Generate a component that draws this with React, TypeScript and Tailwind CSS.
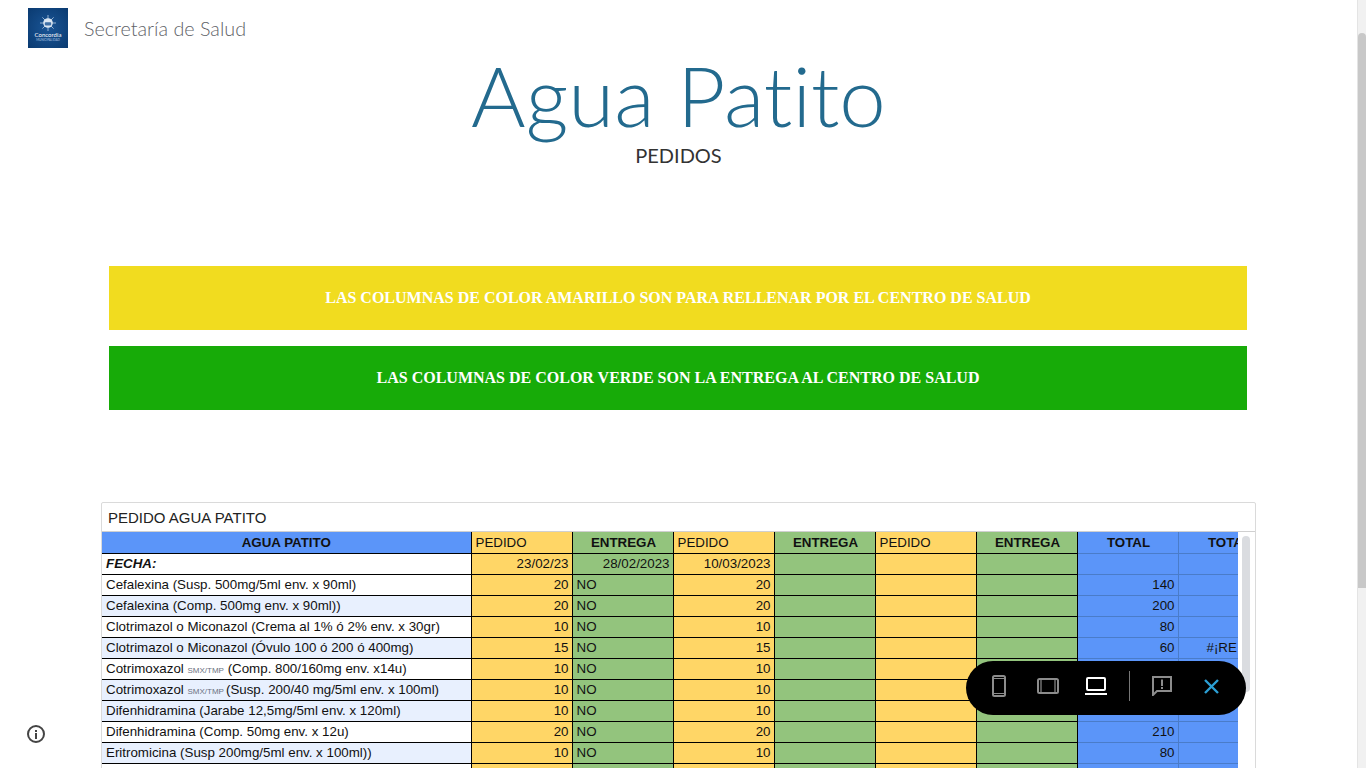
import React from 'react';

const SANS = "font-['Liberation_Sans',Arial,sans-serif]";

interface Row {
  name: React.ReactNode;
  pedido?: string;
  entrega?: string;
  pedido2?: string;
  total?: string;
  total2?: string;
  alt?: boolean;
}

const Smx = () => <span className="text-[8px] text-gray-500">SMX/TMP</span>;

const rows: Row[] = [
  { name: 'Cefalexina (Susp. 500mg/5ml env. x 90ml)', pedido: '20', entrega: 'NO', pedido2: '20', total: '140' },
  { name: 'Cefalexina (Comp. 500mg env. x 90ml))', pedido: '20', entrega: 'NO', pedido2: '20', total: '200', alt: true },
  { name: 'Clotrimazol o Miconazol (Crema al 1% ó 2% env. x 30gr)', pedido: '10', entrega: 'NO', pedido2: '10', total: '80' },
  { name: 'Clotrimazol o Miconazol (Óvulo 100 ó 200 ó 400mg)', pedido: '15', entrega: 'NO', pedido2: '15', total: '60', total2: '#¡RE', alt: true },
  { name: <>Cotrimoxazol <Smx /> (Comp. 800/160mg env. x14u)</>, pedido: '10', entrega: 'NO', pedido2: '10', total: '150' },
  { name: <>Cotrimoxazol <Smx /><span className="ml-[2px]">(Susp. 200/40 mg/5ml env. x 100ml)</span></>, pedido: '10', entrega: 'NO', pedido2: '10', total: '90', alt: true },
  { name: 'Difenhidramina (Jarabe 12,5mg/5ml env. x 120ml)', pedido: '10', entrega: 'NO', pedido2: '10', total: '70', alt: true },
  { name: 'Difenhidramina (Comp. 50mg env. x 12u)', pedido: '20', entrega: 'NO', pedido2: '20', total: '210' },
  { name: 'Eritromicina (Susp 200mg/5ml env. x 100ml))', pedido: '10', entrega: 'NO', pedido2: '10', total: '80', alt: true },
  { name: '' },
];

const td = 'h-[21px] p-0 pl-[4px] pr-[3px] overflow-hidden whitespace-nowrap border border-black leading-none';
const yellow = `${td} bg-[#ffd666] text-right`;
const green = `${td} bg-[#93c47d]`;
const blue = 'h-[21px] p-0 pl-[4px] pr-[3px] overflow-hidden whitespace-nowrap border border-[#4a7cc9] bg-[#5b95f9] text-right leading-none';

function Logo() {
  return (
    <div className="w-10 h-10 shrink-0 bg-[radial-gradient(circle,#1a5596,#0a3a70)] flex flex-col items-center justify-center">
      <svg viewBox="0 0 20 20" className="w-[16px] h-[16px]">
        <g stroke="#b9cde3" strokeWidth="1">
          <path d="M10 0v20M0 10h20M3 3l14 14M17 3L3 17" />
        </g>
        <circle cx="10" cy="10" r="6" fill="#dbe6f2" />
        <rect x="6" y="9" width="8" height="4" rx="1" fill="#3f6fa5" />
      </svg>
      <span className="text-[6px] leading-[7px] text-white font-['Lato',sans-serif]">Concordia</span>
      <span className="text-[3px] leading-[4px] text-[#a9c4e0] font-['Lato',sans-serif]">MUNICIPALIDAD</span>
    </div>
  );
}

function PreviewBar() {
  return (
    <div className="absolute left-[966px] top-[661px] w-[280px] h-[54px] rounded-[27px] bg-black flex items-center pl-[9px] pb-[4px]">
      <div className="w-12 flex justify-center">
        <svg width="14" height="22" viewBox="0 0 14 22" fill="none" stroke="#8c8c8c" strokeWidth="2">
          <rect x="1" y="1" width="12" height="20" rx="1.5" />
          <path d="M1 3.5h12M1 18.5h12" strokeWidth="1.2" />
        </svg>
      </div>
      <div className="w-12 ml-px flex justify-center">
        <svg width="22" height="16" viewBox="0 0 22 16" fill="none" stroke="#8c8c8c" strokeWidth="2">
          <rect x="1" y="1" width="20" height="14" rx="1.5" />
          <path d="M4 1v14M18 1v14" strokeWidth="1.2" />
        </svg>
      </div>
      <div className="w-12 flex justify-center">
        <svg width="22" height="18" viewBox="0 0 22 18" fill="none" stroke="#fff" strokeWidth="2">
          <rect x="2" y="1" width="18" height="12" rx="1" />
          <path d="M0 17h22" />
        </svg>
      </div>
      <div className="w-px h-[30px] bg-[#777] ml-[9px]" />
      <div className="w-12 ml-2 flex justify-center">
        <svg width="20" height="20" viewBox="0 0 20 20" fill="none" stroke="#8c8c8c" strokeWidth="2">
          <path d="M1 1h18v14H5l-4 4z" />
          <path d="M10 3.5v6.5M10 11v2" />
        </svg>
      </div>
      <div className="w-12 ml-px flex justify-center">
        <svg width="15" height="15" viewBox="0 0 15 15" fill="none" stroke="#2b9fd4" strokeWidth="2.4">
          <path d="M1 1l13 13M14 1L1 14" />
        </svg>
      </div>
    </div>
  );
}

export default function App() {
  return (
    <div className="relative h-screen overflow-hidden bg-white flex">
      <div className="w-[1357px] shrink-0 overflow-hidden">
        {/* Header */}
        <header className="h-[58px] pl-[28px] flex items-start pt-[8px]">
          <Logo />
          <span className="ml-[16px] mt-[9px] text-[19.75px] leading-6 font-light text-[#5f6368] font-['Lato',sans-serif]">
            Secretaría de Salud
          </span>
        </header>

        {/* Title */}
        <div className="text-center font-['Lato',sans-serif] [font-variant-ligatures:none]">
          <h1 className="text-[83.4px] leading-[75px] font-light text-[#236a8e]">Agua Patito</h1>
          <p className="mt-[9px] text-[20px] leading-[26px] text-[#333]">PEDIDOS</p>
        </div>

        {/* Banners */}
        <div className="mt-[98px] mx-[109px] w-[1138px] flex flex-col gap-4">
          <div className="h-16 bg-[#f1dc1f] flex items-center justify-center text-white text-[16px] font-bold font-['Liberation_Serif',serif]">
            LAS COLUMNAS DE COLOR AMARILLO SON PARA RELLENAR POR EL CENTRO DE SALUD
          </div>
          <div className="h-16 bg-[#17ab08] flex items-center justify-center text-white text-[16px] font-bold font-['Liberation_Serif',serif]">
            LAS COLUMNAS DE COLOR VERDE SON LA ENTREGA AL CENTRO DE SALUD
          </div>
        </div>

        {/* Embedded sheet */}
        <div className={`relative mt-[92px] ml-[101px] w-[1155px] h-[400px] border border-[#dadada] rounded-t-[2px] ${SANS}`}>
          <div className="h-[29px] pl-[6px] pt-[3px] flex items-center text-[15px] text-[#222] border-b border-[#d0d0d0]">
            PEDIDO AGUA PATITO
          </div>
          <div className="w-[1136px] overflow-hidden">
            <table className="table-fixed border-collapse w-[1177px] text-[13.33px] text-[#111]">
              <colgroup>
                <col className="w-[369px]" />
                <col className="w-[101px]" />
                <col className="w-[101px]" />
                <col className="w-[101px]" />
                <col className="w-[101px]" />
                <col className="w-[101px]" />
                <col className="w-[101px]" />
                <col className="w-[101px]" />
                <col className="w-[101px]" />
              </colgroup>
              <tbody>
                <tr>
                  <td className={`${td} border-t-0 border-l-0 !pl-[3px] bg-[#5b95f9] font-bold text-center`}>AGUA PATITO</td>
                  <td className={`${td} border-t-0 bg-[#ffd666]`}>PEDIDO</td>
                  <td className={`${green} border-t-0 !pl-[5px] font-bold text-center`}>ENTREGA</td>
                  <td className={`${td} border-t-0 bg-[#ffd666]`}>PEDIDO</td>
                  <td className={`${green} border-t-0 !pl-[5px] font-bold text-center`}>ENTREGA</td>
                  <td className={`${td} border-t-0 bg-[#ffd666]`}>PEDIDO</td>
                  <td className={`${green} border-t-0 !pl-[5px] font-bold text-center`}>ENTREGA</td>
                  <td className={`${blue} border-t-0 !pl-[5px] !text-center font-bold`}>TOTAL</td>
                  <td className={`${blue} border-t-0 !pl-[5px] !text-center font-bold`}>TOTAL</td>
                </tr>
                <tr>
                  <td className={`${td} border-l-0 bg-white font-bold italic`}>FECHA:</td>
                  <td className={yellow}>23/02/23</td>
                  <td className={`${green} text-right`}>28/02/2023</td>
                  <td className={yellow}>10/03/2023</td>
                  <td className={green}></td>
                  <td className={yellow}></td>
                  <td className={green}></td>
                  <td className={blue}></td>
                  <td className={blue}></td>
                </tr>
                {rows.map((r, i) => (
                  <tr key={i}>
                    <td className={`${td} border-l-0 ${r.alt ? 'bg-[#e8f0fe]' : 'bg-white'}`}>{r.name}</td>
                    <td className={yellow}>{r.pedido}</td>
                    <td className={green}>{r.entrega}</td>
                    <td className={yellow}>{r.pedido2}</td>
                    <td className={green}></td>
                    <td className={yellow}></td>
                    <td className={green}></td>
                    <td className={blue}>{r.total}</td>
                    <td className={`${blue} !text-left !pl-[28px]`}>{r.total2}</td>
                  </tr>
                ))}
              </tbody>
            </table>
          </div>
          {/* sheet scrollbar */}
          <div className="absolute left-[1140px] top-[33px] w-2 h-[156px] rounded bg-[#dadce0]" />
        </div>
      </div>

      {/* page scrollbar */}
      <div className="w-[9px] shrink-0 bg-[#f1f1f1] border-l border-[#e4e4e4] relative">
        <div className="absolute left-0 top-[33px] w-full h-[555px] bg-[#c8c8c8] rounded-t-sm" />
      </div>

      <PreviewBar />

      <div className="absolute left-[27px] top-[725px] w-[18px] h-[18px] rounded-full border-2 border-[#444] flex flex-col items-center justify-center gap-[1px]">
        <div className="w-[2px] h-[2px] bg-[#444]" />
        <div className="w-[2px] h-[6px] bg-[#444]" />
      </div>
    </div>
  );
}
